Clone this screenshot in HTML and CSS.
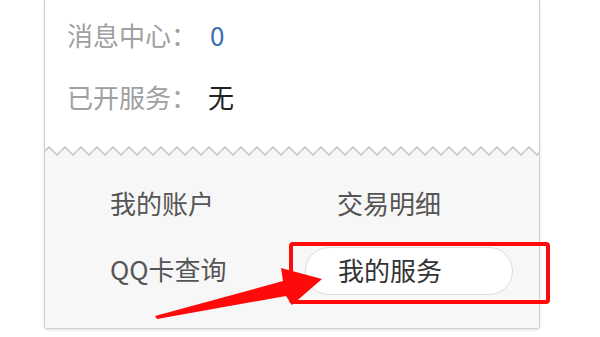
FILE: index.html
```html
<!DOCTYPE html>
<html lang="zh-CN">
<head>
<meta charset="utf-8">
<title>我的服务</title>
<link rel="stylesheet" href="styles.css">
</head>
<body>
<div class="stage">
  <div class="card">
    <div class="info">
      <div class="row"><span class="label">消息中心：</span><span class="val num">0</span></div>
      <div class="row"><span class="label">已开服务：</span><span class="val">无</span></div>
    </div>
    <svg class="wave" width="494" height="12" viewBox="0 0 494 12" preserveAspectRatio="none">
      <defs>
        <pattern id="zz" x="0" y="0" width="16" height="12" patternUnits="userSpaceOnUse">
          <path d="M0 6 L4 2 L12 10 L16 6 L16 12 L0 12 Z" fill="#f7f7f7"/>
          <path d="M0 6 L4 2 L12 10 L16 6" fill="none" stroke="#cccccc" stroke-width="1.8"/>
        </pattern>
      </defs>
      <rect x="0" y="0" width="494" height="12" fill="url(#zz)"/>
    </svg>
    <div class="links">
      <div class="link">我的账户</div>
      <div class="link col2">交易明细</div>
      <div class="link low">QQ卡查询</div>
      <div class="link col2 low pill">我的服务</div>
    </div>
  </div>
  <div class="redbox"></div>
  <svg class="arrow" width="600" height="337" viewBox="0 0 600 337">
    <polygon points="155,316 283,281 281,268 322,279 292,305 286,296 157,319" fill="#ff0a0a"/>
  </svg>
</div>
</body>
</html>
```

FILE: styles.css
```css
html, body {
  margin: 0;
  padding: 0;
  background: #ffffff;
}
body {
  font-family: "Noto Sans CJK SC", "Noto Sans", sans-serif;
  overflow: hidden;
}
.stage {
  position: relative;
  width: 600px;
  height: 337px;
}
.card {
  margin-left: 44px;
  width: 494px;
  border: 1px solid #cfcfcf;
  border-top: none;
  border-radius: 0 0 4px 4px;
  box-shadow: 0 1px 3px rgba(0, 0, 0, 0.12);
  background: #ffffff;
  overflow: hidden;
}
.info {
  padding: 4px 0 17px 22px;
  font-size: 26px;
}
.row {
  height: 62px;
  line-height: 62px;
  display: flex;
}
.label {
  color: #a0a0a0;
}
.val {
  margin-left: 11px;
  color: #222222;
}
.val.num {
  color: #3b6fb0;
  margin-left: 13px;
}
.wave {
  display: block;
  width: 494px;
  height: 12px;
}
.links {
  background: #f7f7f7;
  padding: 22px 0 33px 65px;
  display: grid;
  grid-template-columns: 195px 208px;
  grid-template-rows: 48px 48px;
  row-gap: 20px;
  font-size: 26px;
  color: #555555;
}
.link {
  line-height: 48px;
  height: 48px;
}
.link.col2 {
  padding-left: 32px;
}
.link.low {
  line-height: 44px;
}
.pill {
  box-sizing: border-box;
  height: 48px;
  background: #ffffff;
  border: 1px solid #dcdcdc;
  border-radius: 24px;
  color: #333333;
  padding-left: 31px;
  line-height: 42px;
}
.redbox {
  position: absolute;
  left: 289px;
  top: 242px;
  width: 253px;
  height: 54px;
  border: 4.5px solid #ff0a0a;
  border-radius: 4px;
}
.arrow {
  position: absolute;
  left: 0;
  top: 0;
}
```
